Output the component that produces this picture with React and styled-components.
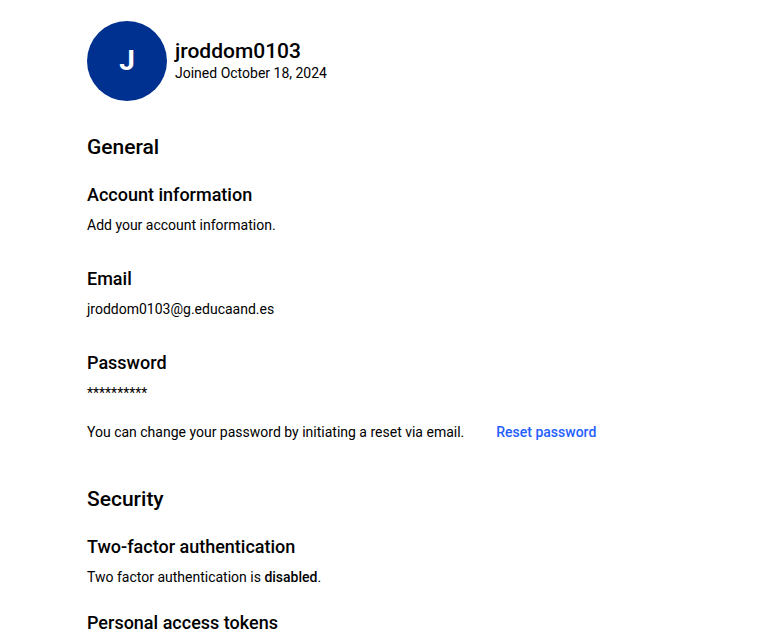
import React from "react";
import styled, { createGlobalStyle } from "styled-components";

const GlobalStyle = createGlobalStyle`
  *, *::before, *::after { box-sizing: border-box; }
  body {
    margin: 0;
    background: #ffffff;
    color: #000000;
    font-family: Roboto, "Open Sans", sans-serif;
    font-size: 14px;
    line-height: 20px;
  }
`;

const Page = styled.main`
  height: 100vh;
  overflow: hidden;
  padding: 21px 87px 0;
`;

const ProfileHeader = styled.header`
  display: flex;
  align-items: center;
  gap: 8px;
  margin-bottom: 30px;
`;

const Avatar = styled.div`
  display: grid;
  place-items: center;
  width: 80px;
  height: 80px;
  flex-shrink: 0;
  border-radius: 50%;
  background: #003090;
  color: #ffffff;
  font-size: 28px;
  font-weight: 700;
  line-height: 32px;
`;

const UserName = styled.h1`
  margin: 0;
  font-size: 21px;
  font-weight: 500;
  line-height: 24px;
`;

const Text = styled.p`
  margin: 0;
`;

const Section = styled.section`
  margin-bottom: 37px;
`;

const SectionTitle = styled.h2`
  margin: 0 0 20px;
  font-size: 21px;
  font-weight: 500;
  line-height: 32px;
`;

const Setting = styled.article`
  margin-bottom: ${({ $gap }) => $gap}px;
`;

const SettingTitle = styled.h3`
  margin: 0 0 8px;
  font-size: 18px;
  font-weight: 500;
  line-height: 24px;
`;

const ActionRow = styled.div`
  display: flex;
  flex-wrap: wrap;
  align-items: center;
  gap: 24px;
  margin-top: 15px;
`;

const TextButton = styled.button`
  padding: 4px 8px;
  border: 0;
  border-radius: 4px;
  background: transparent;
  color: #2560ff;
  font: inherit;
  font-weight: 500;
  cursor: pointer;
`;

const Strong = styled.strong`
  font-weight: 500;
`;

export default function App() {
  return (
    <>
      <GlobalStyle />
      <Page>
        <ProfileHeader>
          <Avatar aria-hidden="true">J</Avatar>
          <div>
            <UserName>jroddom0103</UserName>
            <Text>Joined October 18, 2024</Text>
          </div>
        </ProfileHeader>
        <Section>
          <SectionTitle>General</SectionTitle>
          <Setting $gap={32}>
            <SettingTitle>Account information</SettingTitle>
            <Text>Add your account information.</Text>
          </Setting>
          <Setting $gap={32}>
            <SettingTitle>Email</SettingTitle>
            <Text>jroddom0103@g.educaand.es</Text>
          </Setting>
          <Setting $gap={0}>
            <SettingTitle>Password</SettingTitle>
            <Text>**********</Text>
            <ActionRow>
              <Text>You can change your password by initiating a reset via email.</Text>
              <TextButton type="button">Reset password</TextButton>
            </ActionRow>
          </Setting>
        </Section>
        <Section>
          <SectionTitle>Security</SectionTitle>
          <Setting $gap={24}>
            <SettingTitle>Two-factor authentication</SettingTitle>
            <Text>
              Two factor authentication is <Strong>disabled</Strong>.
            </Text>
          </Setting>
          <Setting $gap={0}>
            <SettingTitle>Personal access tokens</SettingTitle>
          </Setting>
        </Section>
      </Page>
    </>
  );
}
